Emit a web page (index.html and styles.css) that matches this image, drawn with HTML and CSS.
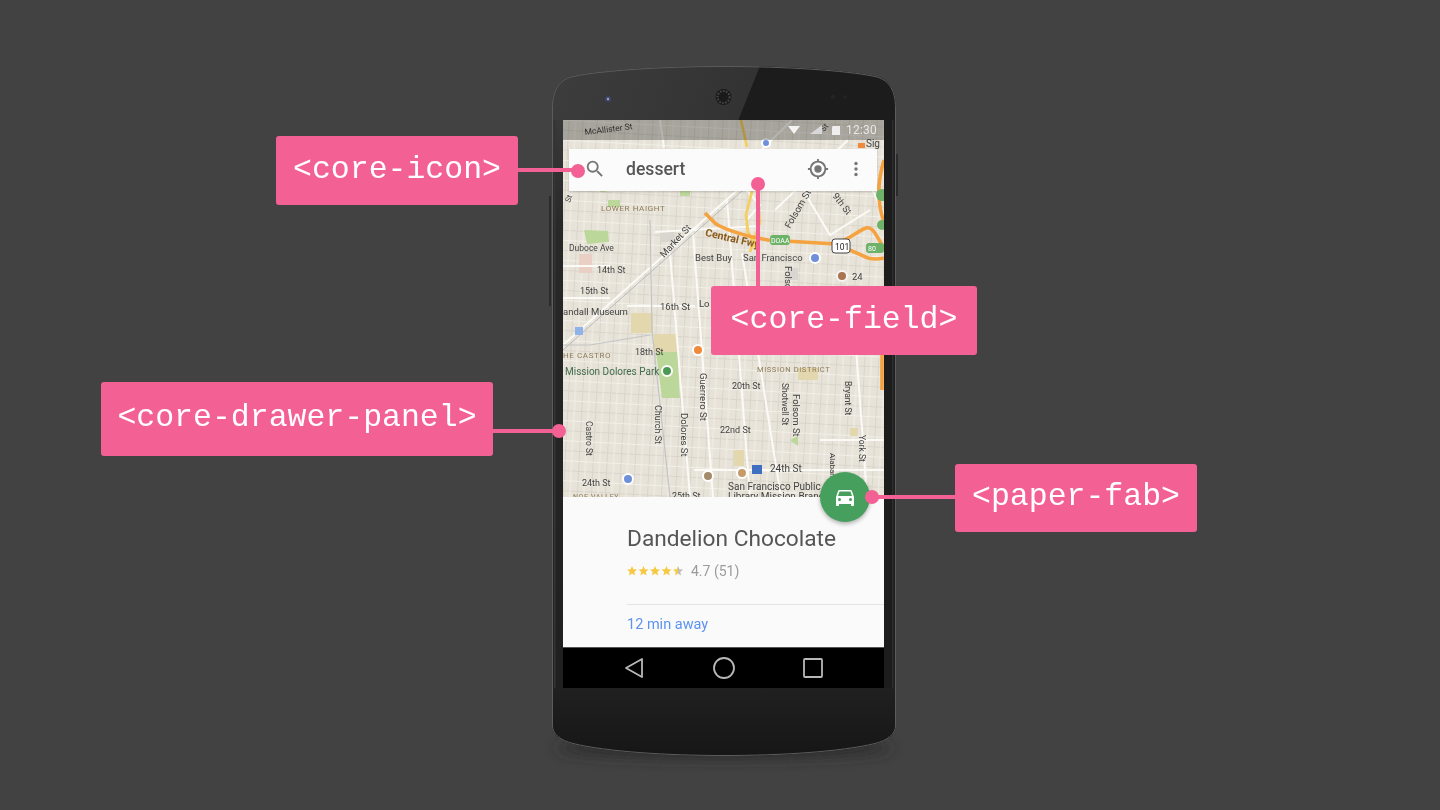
FILE: index.html
```html
<!DOCTYPE html>
<html lang="en">
<head>
<meta charset="utf-8">
<title>Polymer elements on a phone</title>
<link rel="stylesheet" href="styles.css">
</head>
<body>
<main class="stage">
  <div class="phone">
    <svg class="body-art" viewBox="0 0 344 691" width="344" height="691" aria-hidden="true">
      <defs>
        <linearGradient id="bez" x1="0" y1="0" x2="1" y2="0.35">
          <stop offset="0" stop-color="#3d3d3d"/><stop offset="1" stop-color="#2a2a2a"/>
        </linearGradient>
        <linearGradient id="chin" x1="0" y1="0" x2="0" y2="1">
          <stop offset="0" stop-color="#202020"/><stop offset="1" stop-color="#161616"/>
        </linearGradient>
        <linearGradient id="side" x1="0" y1="0" x2="0" y2="1">
          <stop offset="0" stop-color="#393939"/><stop offset=".2" stop-color="#282828"/><stop offset="1" stop-color="#202020"/>
        </linearGradient>
        <filter id="sh" x="-20%" y="-100%" width="140%" height="300%"><feGaussianBlur stdDeviation="7"/></filter>
        <clipPath id="shell"><path d="M0 42C0 22 8 13 21 10C50 4 110 0 172 0C234 0 294 4 323 10C336 13 344 22 344 42V660C344 668 336 675 323 678C290 686 230 690 172 690C114 690 54 686 21 678C8 675 0 668 0 660Z"/></clipPath>
      </defs>
      <ellipse cx="172" cy="682" rx="168" ry="10" fill="#2a2a2a" filter="url(#sh)"/>
      <path d="M0 42C0 22 8 13 21 10C50 4 110 0 172 0C234 0 294 4 323 10C336 13 344 22 344 42V660C344 668 336 675 323 678C290 686 230 690 172 690C114 690 54 686 21 678C8 675 0 668 0 660Z" fill="#242424"/>
      <g clip-path="url(#shell)">
        <rect x="0" y="0" width="344" height="300" fill="url(#bez)"/>
        <path d="M208 0H344V60H184Z" fill="#1c1c1c"/>
        <rect x="0" y="622" width="344" height="70" fill="url(#chin)"/>
        <rect x="0" y="54" width="11" height="568" fill="url(#side)"/>
        <rect x="332" y="54" width="12" height="568" fill="#1d1d1d"/>
        <rect x="2" y="54" width="1.500" height="568" fill="#343434"/>
        <rect x="340" y="54" width="1.500" height="568" fill="#2e2e2e"/>
      </g>
      <path d="M.5 42C.5 22 8.500 13.500 21 10.500C50 4.500 110 .5 172 .5C234 .5 294 4.500 323 10.500C335.500 13.500 343.500 22 343.500 42V660C343.500 668 335.500 674.500 323 677.500C290 685.500 230 689.500 172 689.500C114 689.500 54 685.500 21 677.500C8.500 674.500 .5 668 .5 660Z" fill="none" stroke="#5c5c5c" stroke-width="1"/>
      <rect x="344" y="88" width="2" height="42" fill="#2b2b2b"/>
      <rect x="-3" y="130" width="2" height="110" fill="#2b2b2b"/>
      <circle cx="56" cy="33" r="3" fill="#3d4566"/>
      <circle cx="56" cy="33" r="1.200" fill="#9aa2c0"/>
      <circle cx="171.500" cy="31" r="8" fill="#1a1a1a"/>
      <circle cx="171.500" cy="31" r="6" fill="none" stroke="#4a4a4a" stroke-width="2" stroke-dasharray="1.500 1.500"/>
      <circle cx="281" cy="31" r="2.500" fill="#232323"/>
      <circle cx="293" cy="31" r="2" fill="#232323"/>
    </svg>

    <div class="screen">
      <div class="map">
        <svg class="map-art" viewBox="563 120 321 377" width="321" height="377" aria-hidden="true">
          <defs>
            <pattern id="blocks" width="28" height="20" patternUnits="userSpaceOnUse" patternTransform="rotate(3)">
              <path d="M0 .5H28M.5 0V20M14.500 0V20" stroke="#d9d5ca" stroke-width="1" fill="none"/>
              <path d="M7 0V20M21 0V20M0 10.500H28" stroke="#f4f2ec" stroke-width=".8" fill="none"/>
            </pattern>
          </defs>
          <rect x="563" y="120" width="321" height="377" fill="#e8e3d8"/>
          <rect x="563" y="120" width="321" height="377" fill="url(#blocks)"/>

          <path d="M579 254h13v19h-13z" fill="#e9cfc4"/>
          <path d="M584 230l24 1 1 11-22 2z" fill="#bcd79a"/>
          <path d="M631 313h22v20h-22zM654 334h24v18h-24zM734 450h10v16h-10z" fill="#e3d8ad"/>
          <path d="M656 352h22l1 32 1 14h-18z" fill="#bcd79a"/>
          <path d="M798 368h20v12h-20zM850 428h8v8h-8z" fill="#e3d8ad"/>
          <path d="M790 440l8-4v10zM600 187h6v5h-6zM680 191h10v5h-10zM608 200h12v7h-12z" fill="#bcd79a"/>
          <path d="M788 268h10v12h-10zM660 232h14v10h-14z" fill="#d9d6d0"/>

          <g fill="none" stroke="#fbfaf6" stroke-width="2">
            <path d="M670 253L690 497"/>
            <path d="M693 233L713 497"/>
            <path d="M727 200L750 497"/>
            <path d="M742 253L781 497"/>
            <path d="M563 266H610M563 298H610M627 306H695M655 232L760 226"/>
            <path d="M563 345L760 170"/>
            <path d="M694 470H884M820 440H884"/>
            <path d="M792 120L735 176M848 140L775 210"/>
            <path d="M728 170L760 205L745 222"/>
            <path d="M803 190L830 235L870 210M868 180L884 215"/>
            <path d="M854 320L867 497"/>
            <path d="M660 120L664 148"/>
          </g>
          <path d="M563 350L760 175" fill="none" stroke="#b7b9be" stroke-width="1"/>
          <path d="M563 345H590L650 335M650 220L652 330L670 497" fill="none" stroke="#c3c3c6" stroke-width="1.200"/>
          <path d="M741 120L747 147M752 191L746 215L748 232L757 250M757 195L760 222L750 252" fill="none" stroke="#f3cf63" stroke-width="2.800"/>
          <path d="M705 213L716 224C730 232 745 236 768 240L836 244L868 258C876 260 884 258 884 258M836 243C850 240 855 232 866 228C874 226 878 240 884 248M884 160C878 180 876 200 884 222M882 352V390" fill="none" stroke="#f4a340" stroke-width="3.600"/>

          <rect x="770" y="235" width="20" height="10" rx="3" fill="#6eb26a"/>
          <rect x="832" y="239" width="18" height="14" rx="3" fill="#fff" stroke="#444" stroke-width="1"/>
          <rect x="866" y="243" width="18" height="10" rx="3" fill="#6eb26a"/>
          <circle cx="882" cy="195" r="6" fill="#6eb26a"/>
          <circle cx="882" cy="225" r="5" fill="#6eb26a"/>

          <g font-family="'Roboto','Liberation Sans',sans-serif" font-size="9.500" fill="#434343">
            <text x="585" y="135" font-size="8.500" transform="rotate(-7 585 135)">McAllister St</text>
            <text x="824" y="132" font-size="8" transform="rotate(-50 824 132)">St</text>
            <text x="866" y="147" font-size="10">Sig</text>
            <text x="570" y="203" font-size="8" transform="rotate(-70 570 203)">St</text>
            <text x="790" y="229" transform="rotate(-60 790 229)">Folsom St</text>
            <text x="832" y="196" transform="rotate(52 832 196)">9th St</text>
            <text x="664" y="258" transform="rotate(-47 664 258)">Market St</text>
            <text x="771" y="243" font-size="7" fill="#fff">DOAA</text>
            <text x="835" y="250" font-size="8.500" fill="#222">101</text>
            <text x="868" y="251" font-size="7" fill="#fff">80</text>
            <text x="695" y="261">Best Buy</text>
            <text x="743" y="261">San Francisco</text>
            <text x="569" y="251" font-size="8.500">Duboce Ave</text>
            <text x="597" y="273" font-size="9">14th St</text>
            <text x="580" y="294" font-size="9">15th St</text>
            <text x="660" y="310">16th St</text>
            <text x="699" y="307">Lo</text>
            <text x="563" y="315">andall Museum</text>
            <text x="635" y="355" font-size="9">18th St</text>
            <text x="732" y="389" font-size="9">20th St</text>
            <text x="720" y="433" font-size="9">22nd St</text>
            <text x="770" y="472" font-size="10">24th St</text>
            <text x="582" y="486" font-size="9">24th St</text>
            <text x="672" y="499" font-size="9">25th St</text>
            <text x="728" y="490" font-size="10">San Francisco Public</text>
            <text x="728" y="500" font-size="10">Library Mission Branch</text>
            <text x="852" y="280">24</text>
            <text x="700" y="373" transform="rotate(90 700 373)">Guerrero St</text>
            <text x="681" y="413" transform="rotate(90 681 413)">Dolores St</text>
            <text x="655" y="405" font-size="9" transform="rotate(90 655 405)">Church St</text>
            <text x="586" y="421" font-size="8.500" transform="rotate(90 586 421)">Castro St</text>
            <text x="782" y="383" font-size="8.500" transform="rotate(90 782 383)">Shotwell St</text>
            <text x="793" y="394" transform="rotate(90 793 394)">Folsom St</text>
            <text x="785" y="266" transform="rotate(90 785 266)">Folsom</text>
            <text x="845" y="381" font-size="8.500" transform="rotate(90 845 381)">Bryant St</text>
            <text x="859" y="435" font-size="8.500" transform="rotate(90 859 435)">York St</text>
            <text x="830" y="453" font-size="8" transform="rotate(90 830 453)">Alabama</text>
            <text x="565" y="375" fill="#3f6b4c" font-size="10">Mission Dolores Park</text>
          </g>
          <g font-family="'Roboto','Liberation Sans',sans-serif" font-size="8" fill="#8d7a57" letter-spacing=".6">
            <text x="601" y="211">LOWER HAIGHT</text>
            <text x="563" y="358">HE CASTRO</text>
            <text x="757" y="372" font-size="7.500">MISSION DISTRICT</text>
            <text x="573" y="499" font-size="7">NOE VALLEY</text>
          </g>
          <text x="707" y="236" font-family="'Roboto','Liberation Sans',sans-serif" font-size="10.500" font-weight="700" fill="#8a5a1a" transform="rotate(13 707 226)">Central Fwy</text>

          <g stroke="#fff" stroke-width="2">
            <circle cx="815" cy="258" r="5" fill="#6f8fd8"/>
            <circle cx="842" cy="276" r="5" fill="#a9744f" stroke="#f5f5f5"/>
            <circle cx="698" cy="350" r="5" fill="#ef8a3c"/>
            <circle cx="667" cy="371" r="5" fill="#4c9a52"/>
            <circle cx="628" cy="479" r="5" fill="#6f8fd8"/>
            <circle cx="708" cy="476" r="5" fill="#a58a6a"/>
            <circle cx="742" cy="473" r="5" fill="#c79a6a"/>
            <circle cx="766" cy="143" r="4" fill="#6f8fd8"/>
          </g>
          <rect x="575" y="327" width="8" height="8" fill="#8fb3e8"/>
          <rect x="752" y="465" width="10" height="9" fill="#3f6fc0"/>
          <rect x="858" y="143" width="7" height="5" fill="#ef8a3c"/>
        </svg>

        <div class="statusbar">
          <svg class="status-icons" viewBox="0 0 64 20" width="64" height="20" aria-hidden="true">
            <path d="M9 6h12l-6 8z" fill="#f4f4f4"/>
            <path d="M31 14l12-9v9z" fill="#d8d8d8"/>
            <path d="M54 6h7v9h-8v-8z" fill="#eee"/>
          </svg>
          <span class="clock">12:30</span>
        </div>

        <div class="searchbar">
          <svg class="search-glyph" viewBox="0 0 24 24" width="22" height="22" aria-hidden="true">
            <path d="M15.500 14h-.79l-.28-.27A6.470 6.470 0 0 0 16 9.500 6.500 6.500 0 1 0 9.500 16c1.610 0 3.090-.59 4.230-1.570l.27.28v.79l5 4.990L20.490 19l-4.990-5zm-6 0C7.010 14 5 11.990 5 9.500S7.010 5 9.500 5 14 7.010 14 9.500 11.990 14 9.500 14z" fill="#757575"/>
          </svg>
          <span class="query">dessert</span>
          <svg class="target-glyph" viewBox="0 0 24 24" width="22" height="22" aria-hidden="true">
            <path d="M12 8a4 4 0 1 0 0 8 4 4 0 0 0 0-8zm8.900 3A9 9 0 0 0 13 3.100V1h-2v2.100A9 9 0 0 0 3.100 11H1v2h2.100a9 9 0 0 0 7.900 7.900V23h2v-2.100a9 9 0 0 0 7.900-7.900H23v-2zM12 19a7 7 0 1 1 0-14 7 7 0 0 1 0 14z" fill="#757575"/>
          </svg>
          <svg class="more-glyph" viewBox="0 0 4 16" width="4" height="16" aria-hidden="true">
            <circle cx="2" cy="2.500" r="1.700" fill="#757575"/><circle cx="2" cy="8" r="1.700" fill="#757575"/><circle cx="2" cy="13.500" r="1.700" fill="#757575"/>
          </svg>
        </div>
      </div>

      <section class="sheet">
        <h1 class="place">Dandelion Chocolate</h1>
        <div class="rating">
          <svg class="stars" viewBox="0 0 56 10" width="56" height="10" aria-hidden="true">
            <defs>
              <path id="star" d="M5 0l1.400 3.300 3.600.3-2.700 2.300.8 3.500L5 7.600 1.900 9.400l.8-3.500L0 3.600l3.600-.3z"/>
              <linearGradient id="half"><stop offset=".5" stop-color="#f6c944"/><stop offset=".5" stop-color="#bdbdbd"/></linearGradient>
            </defs>
            <use href="#star" fill="#f6c944"/>
            <use href="#star" x="11.500" fill="#f6c944"/>
            <use href="#star" x="23" fill="#f6c944"/>
            <use href="#star" x="34.500" fill="#f6c944"/>
            <use href="#star" x="46" fill="url(#half)"/>
          </svg>
          <span class="score">4.7 (51)</span>
        </div>
        <hr class="rule">
        <p class="eta">12 min away</p>
      </section>

      <nav class="navbar">
        <svg viewBox="0 0 22 24" width="22" height="24" aria-hidden="true"><path d="M19 3v18L3 12z" fill="none" stroke="#b8b8b8" stroke-width="1.800" stroke-linejoin="round"/></svg>
        <svg viewBox="0 0 24 24" width="24" height="24" aria-hidden="true"><circle cx="12" cy="12" r="10" fill="none" stroke="#b8b8b8" stroke-width="1.800"/></svg>
        <svg viewBox="0 0 22 22" width="22" height="22" aria-hidden="true"><rect x="2" y="2" width="18" height="18" rx="1" fill="none" stroke="#b8b8b8" stroke-width="1.800"/></svg>
      </nav>

      <div class="fab">
        <svg viewBox="0 0 24 24" width="24" height="24" aria-hidden="true">
          <path d="M18.900 6c-.2-.6-.8-1-1.400-1h-11c-.7 0-1.200.4-1.400 1L3 12v8c0 .6.400 1 1 1h1c.6 0 1-.4 1-1v-1h12v1c0 .6.400 1 1 1h1c.6 0 1-.4 1-1v-8zM6.500 16a1.500 1.500 0 1 1 0-3 1.500 1.500 0 0 1 0 3zm11 0a1.500 1.500 0 1 1 0-3 1.500 1.500 0 0 1 0 3zM5 11l1.500-4.500h11L19 11z" fill="#fff"/>
        </svg>
      </div>
    </div>
  </div>

  <div class="leader leader-icon"></div>
  <div class="leader leader-field"></div>
  <div class="leader leader-drawer"></div>
  <div class="leader leader-fab"></div>
  <div class="dot dot-icon"></div>
  <div class="dot dot-field"></div>
  <div class="dot dot-drawer"></div>
  <div class="dot dot-fab"></div>

  <div class="tag tag-icon">&lt;core-icon&gt;</div>
  <div class="tag tag-field">&lt;core-field&gt;</div>
  <div class="tag tag-drawer">&lt;core-drawer-panel&gt;</div>
  <div class="tag tag-fab">&lt;paper-fab&gt;</div>
</main>
</body>
</html>
```
FILE: styles.css
```css
* { box-sizing: border-box; }

html, body {
  margin: 0;
  height: 100%;
}

body {
  background: #424242;
  overflow: hidden;
  font-family: "Roboto", "Liberation Sans", sans-serif;
}

.stage {
  position: relative;
  width: 1440px;
  height: 810px;
  padding: 66px 0 0 552px;
}

.phone {
  position: relative;
  width: 344px;
  height: 691px;
  padding: 54px 12px 0 11px;
}

.body-art {
  position: absolute;
  left: 0;
  top: 0;
  overflow: visible;
}

.screen {
  position: relative;
  width: 321px;
  height: 568px;
  display: flex;
  flex-direction: column;
  filter: blur(.4px);
}

.map {
  position: relative;
  height: 377px;
  flex: none;
  overflow: hidden;
}

.map-art {
  display: block;
}

.statusbar {
  position: absolute;
  left: 0;
  top: 0;
  right: 0;
  height: 20px;
  padding-right: 7px;
  background: rgba(0, 0, 0, .28);
  display: flex;
  align-items: center;
  justify-content: flex-end;
  gap: 3px;
}

.clock {
  color: #e8e8e8;
  font-size: 12px;
  letter-spacing: .2px;
}

.searchbar {
  position: absolute;
  left: 6px;
  top: 29px;
  width: 308px;
  height: 42px;
  padding: 0 19px 2px 15px;
  background: #fbfbfb;
  display: flex;
  align-items: center;
  box-shadow: 0 1px 2px rgba(0, 0, 0, .2);
}

.query {
  margin-left: 20px;
  flex: 1;
  color: #555;
  font-size: 17.600px;
  font-weight: 500;
}

.target-glyph { margin-right: 25px; }

.sheet {
  flex: 1;
  padding: 28px 0 0 64px;
  background: #fafafa;
  overflow: hidden;
}

.place {
  margin: 0;
  color: #555;
  font-size: 22.700px;
  line-height: 28px;
  font-weight: 400;
  white-space: nowrap;
}

.rating {
  margin-top: 10px;
  height: 16px;
  display: flex;
  align-items: center;
  gap: 8px;
}

.score {
  color: #9b9b9b;
  font-size: 14px;
}

.rule {
  margin: 25px 0 0;
  border: 0;
  border-top: 1px solid #e4e4e4;
}

.eta {
  margin: 11px 0 0;
  color: #5c93f0;
  font-size: 14.500px;
  line-height: 18px;
}

.navbar {
  height: 41px;
  flex: none;
  padding: 0 60px 0 60px;
  background: #000;
  border-top: 1px solid #555;
  display: flex;
  align-items: center;
  justify-content: space-between;
}

.fab {
  position: absolute;
  left: 257px;
  top: 352px;
  width: 50px;
  height: 50px;
  border-radius: 50%;
  background: #479f5e;
  box-shadow: 0 2px 4px rgba(0, 0, 0, .3);
  display: flex;
  align-items: center;
  justify-content: center;
}

.tag {
  position: absolute;
  display: flex;
  align-items: center;
  justify-content: center;
  padding-bottom: 3px;
  background: #f36194;
  border-radius: 3px;
  color: #fff;
  font-family: "Liberation Mono", "DejaVu Sans Mono", monospace;
  font-size: 31.500px;
  white-space: nowrap;
  filter: blur(.3px);
}

.tag-icon { left: 276px; top: 136px; width: 242px; height: 69px; }
.tag-field { left: 711px; top: 286px; width: 266px; height: 69px; }
.tag-drawer { left: 101px; top: 382px; width: 392px; height: 74px; }
.tag-fab { left: 955px; top: 464px; width: 242px; height: 68px; }

.leader {
  position: absolute;
  background: #f36194;
}

.leader-icon { left: 518px; top: 168px; width: 60px; height: 4px; }
.leader-field { left: 756px; top: 184px; width: 4px; height: 102px; }
.leader-drawer { left: 493px; top: 429px; width: 66px; height: 4px; }
.leader-fab { left: 872px; top: 495px; width: 83px; height: 4px; }

.dot {
  position: absolute;
  width: 14px;
  height: 14px;
  border-radius: 50%;
  background: #f36194;
}

.dot-icon { left: 571px; top: 164px; }
.dot-field { left: 751px; top: 177px; }
.dot-drawer { left: 552px; top: 424px; }
.dot-fab { left: 865px; top: 490px; }
```
